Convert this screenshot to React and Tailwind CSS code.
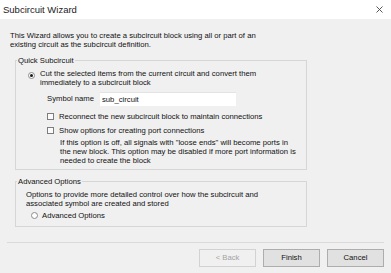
import React from "react";

// small radio button, filled dot when checked
const Radio = ({ checked }) => (
  <span className="w-[7px] h-[7px] mt-[1px] rounded-full border border-[#8c8c8c] bg-white flex items-center justify-center shrink-0">
    {checked && <span className="w-[3px] h-[3px] rounded-full bg-[#1a1a1a]" />}
  </span>
);

const Check = () => (
  <span className="w-[7px] h-[7px] mt-[1px] border border-[#7d7d7d] bg-[#fbfbfb] shrink-0" />
);

const Button = ({ children, disabled }) => (
  <button
    type="button"
    className={
      disabled
        ? "w-[57px] h-[18px] border border-[#d2d2d2] bg-[#f0f0f0] text-[#a3a3a3]"
        : "w-[57px] h-[18px] border border-[#adadad] bg-[#e1e1e1] text-[#111]"
    }
  >
    {children}
  </button>
);

export default function App() {
  return (
    <div className="w-[391px] h-[273px] bg-[#f0f0f0] flex flex-col overflow-hidden font-['Liberation_Sans',Arial,sans-serif] text-[7.7px] leading-[9px] text-[#111]">
      {/* title bar */}
      <div className="h-[19px] shrink-0 bg-white flex items-center justify-between pl-[3px] pr-[8px]">
        <span className="text-[9.5px] text-[#222]">Subcircuit Wizard</span>
        <svg width="7" height="7" viewBox="0 0 7 7">
          <path d="M0.5 0.5L6.5 6.5M6.5 0.5L0.5 6.5" stroke="#444" strokeWidth="0.9" />
        </svg>
      </div>

      <p className="pl-[10px] pt-[11.5px] whitespace-nowrap">
        This Wizard allows you to create a subcircuit block using all or part of an
        <br />
        existing circuit as the subcircuit definition.
      </p>

      {/* Quick Subcircuit */}
      <fieldset className="ml-[15px] mt-[7.5px] w-[292px] border border-[#d6d6d6] p-0 min-w-0">
        <legend className="ml-[1px] px-[1px]">Quick Subcircuit</legend>
        <div className="pl-[12px] pt-[4px] pb-[4px]">
          <div className="flex items-start gap-[5px]">
            <span className="mt-[2px]">
              <Radio checked />
            </span>
            <span className="whitespace-nowrap">
              Cut the selected items from the current circuit and convert them
              <br />
              immediately to a subcircuit block
            </span>
          </div>
          <div className="ml-[19px] mt-[4.5px] flex items-center">
            <span className="w-[53px]">Symbol name</span>
            <div className="w-[136px] h-[14px] bg-white border-t border-[#e3e3e3] flex items-center pl-[2px]">
              sub_circuit
            </div>
          </div>
          <div className="ml-[19px] mt-[6px] flex items-start gap-[5px]">
            <Check />
            <span>Reconnect the new subcircuit block to maintain connections</span>
          </div>
          <div className="ml-[19px] mt-[5px] flex items-start gap-[5px]">
            <Check />
            <span>Show options for creating port connections</span>
          </div>
          <p className="ml-[32px] mt-[3.5px] whitespace-nowrap">
            If this option is off, all signals with "loose ends" will become ports in
            <br />
            the new block. This option may be disabled if more port information is
            <br />
            needed to create the block
          </p>
        </div>
      </fieldset>

      {/* Advanced Options */}
      <fieldset className="ml-[15px] mt-[6.5px] w-[292px] border border-[#d6d6d6] p-0 min-w-0">
        <legend className="ml-[1px] px-[1px]">Advanced Options</legend>
        <div className="pl-[10px] pt-[4px] pb-[6px]">
          <p className="whitespace-nowrap">
            Options to provide more detailed control over how the subcircuit and
            <br />
            associated symbol are created and stored
          </p>
          <div className="ml-[5px] mt-[3px] flex items-start gap-[4px]">
            <Radio />
            <span>Advanced Options</span>
          </div>
        </div>
      </fieldset>

      <div className="mx-[7px] mt-[15px] h-px bg-[#dadada]" />

      <div className="flex justify-end gap-[7px] pr-[7px] mt-[6px]">
        <Button disabled>&lt; Back</Button>
        <Button>Finish</Button>
        <Button>Cancel</Button>
      </div>
    </div>
  );
}
